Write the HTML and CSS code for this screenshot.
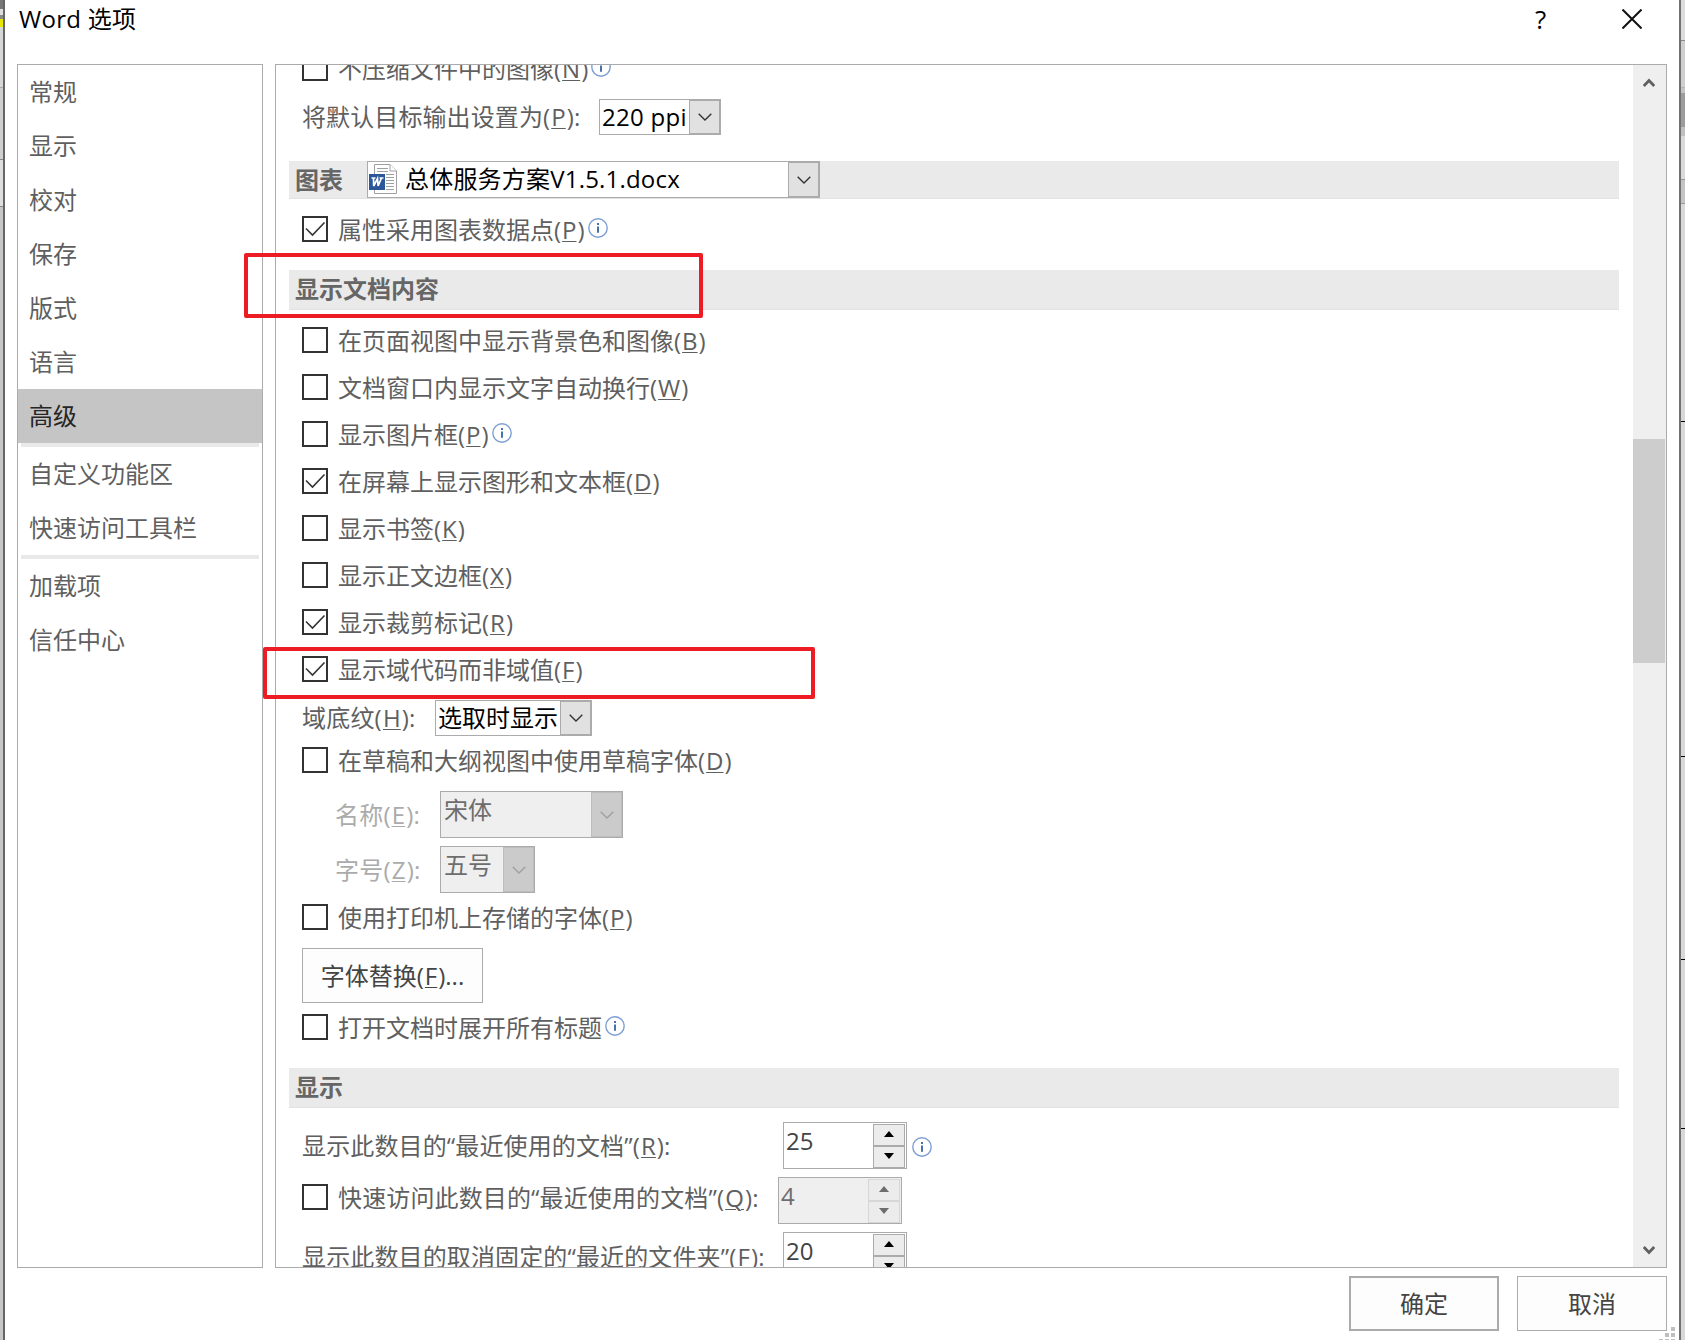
FILE: index.html
```html
<!DOCTYPE html>
<html lang="zh-CN">
<head>
<meta charset="UTF-8">
<meta name="viewport" content="width=device-width, initial-scale=1.0">
<title>Word 选项</title>
<link rel="stylesheet" href="styles.css">
</head>
<body>
    <!-- shared icons -->
    <svg class="defs" width="0" height="0">
        <symbol id="check" viewBox="0 0 22 22">
            <path d="M2 10.5 L8.5 17 L20.5 4.5" fill="none" stroke="#333" stroke-width="1.6"/>
        </symbol>
        <symbol id="info" viewBox="0 0 20 20">
            <circle cx="10" cy="10" r="9.2" fill="#fff" stroke="#7d9fd3" stroke-width="1.4"/>
            <path d="M9 5h2v2h-2zM9 8.4h2v6.4h-2z" fill="#4472b0"/>
        </symbol>
        <symbol id="arrow" viewBox="0 0 14 8">
            <path d="M0.7 0.8 L7 7 L13.3 0.8" fill="none" stroke="currentColor" stroke-width="1.4"/>
        </symbol>
        <symbol id="up" viewBox="0 0 10 6">
            <path d="M5 0 L10 6 H0z" fill="currentColor"/>
        </symbol>
        <symbol id="down" viewBox="0 0 10 6">
            <path d="M0 0 H10 L5 6z" fill="currentColor"/>
        </symbol>
    </svg>

    <div class="backdrop left"></div>
    <div class="dialog">
        <div class="titlebar">
            <span class="title">Word 选项</span>
            <span class="help">?</span>
            <svg class="close" width="20" height="20" viewBox="0 0 20 20"><path d="M0.5 0.5 L19.5 19.5 M19.5 0.5 L0.5 19.5" stroke="#111" stroke-width="2"/></svg>
        </div>

        <div class="main">
            <ul class="nav">
                <li>常规</li>
                <li>显示</li>
                <li>校对</li>
                <li>保存</li>
                <li>版式</li>
                <li>语言</li>
                <li class="active">高级</li>
                <li class="line"></li>
                <li>自定义功能区</li>
                <li>快速访问工具栏</li>
                <li class="line"></li>
                <li>加载项</li>
                <li>信任中心</li>
            </ul>

            <div class="panel">
                <div class="content">
                    <div class="row short"><span class="box"></span><label>不压缩文件中的图像(<u>N</u>)</label><svg class="info"><use href="#info"/></svg></div>
                    <div class="row resolution">
                        <label>将默认目标输出设置为(<u>P</u>):</label>
                        <div class="select ppi"><span>220 ppi</span><i><svg><use href="#arrow"/></svg></i></div>
                    </div>

                    <div class="section chart">
                        <h3>图表</h3>
                        <div class="select file">
                            <svg class="doc" width="28" height="30" viewBox="0 0 28 30">
                                <path d="M5.5 0.5 H21 L27.5 7 V29.5 H5.5z" fill="#fff" stroke="#a0a0a0"/>
                                <path d="M21 0.5 V7 H27.5" fill="#fff" stroke="#a0a0a0"/>
                                <path d="M8 4.5h11M8 7.5h11M17 10.5h8M17 13.5h8M17 16.5h8M17 19.5h8M17 22.5h8M17 25.5h8" stroke="#a0a0a0"/>
                                <rect x="0" y="10" width="16" height="16" fill="#2b579a"/>
                                <path d="M2.5 14h4M4.5 14l0.2 8L8.5 14.5l0.6 7.5L12.5 14M10.5 14h4" fill="none" stroke="#fff" stroke-width="1.7"/>
                            </svg>
                            <span>总体服务方案V1.5.1.docx</span><i><svg><use href="#arrow"/></svg></i>
                        </div>
                    </div>
                    <div class="row tall"><span class="box"><svg><use href="#check"/></svg></span><label>属性采用图表数据点(<u>P</u>)</label><svg class="info"><use href="#info"/></svg></div>

                    <div class="section"><h3>显示文档内容</h3></div>
                    <div class="row"><span class="box"></span><label>在页面视图中显示背景色和图像(<u>B</u>)</label></div>
                    <div class="row"><span class="box"></span><label>文档窗口内显示文字自动换行(<u>W</u>)</label></div>
                    <div class="row"><span class="box"></span><label>显示图片框(<u>P</u>)</label><svg class="info"><use href="#info"/></svg></div>
                    <div class="row"><span class="box"><svg><use href="#check"/></svg></span><label>在屏幕上显示图形和文本框(<u>D</u>)</label></div>
                    <div class="row"><span class="box"></span><label>显示书签(<u>K</u>)</label></div>
                    <div class="row"><span class="box"></span><label>显示正文边框(<u>X</u>)</label></div>
                    <div class="row"><span class="box"><svg><use href="#check"/></svg></span><label>显示裁剪标记(<u>R</u>)</label></div>
                    <div class="row short"><span class="box"><svg><use href="#check"/></svg></span><label>显示域代码而非域值(<u>F</u>)</label></div>
                    <div class="row shading">
                        <label>域底纹(<u>H</u>):</label>
                        <div class="select field"><span>选取时显示</span><i><svg><use href="#arrow"/></svg></i></div>
                    </div>
                    <div class="row short"><span class="box"></span><label>在草稿和大纲视图中使用草稿字体(<u>D</u>)</label></div>
                    <div class="row sub">
                        <label>名称(<u>E</u>):</label>
                        <div class="select disabled font"><span>宋体</span><i><svg><use href="#arrow"/></svg></i></div>
                    </div>
                    <div class="row sub last">
                        <label>字号(<u>Z</u>):</label>
                        <div class="select disabled size"><span>五号</span><i><svg><use href="#arrow"/></svg></i></div>
                    </div>
                    <div class="row short"><span class="box"></span><label>使用打印机上存储的字体(<u>P</u>)</label></div>
                    <div class="row action"><button class="btn">字体替换(<u>F</u>)...</button></div>
                    <div class="row tall"><span class="box"></span><label>打开文档时展开所有标题</label><svg class="info"><use href="#info"/></svg></div>

                    <div class="section display"><h3>显示</h3></div>
                    <div class="row number">
                        <label>显示此数目的“最近使用的文档”(<u>R</u>):</label>
                        <div class="spin"><span>25</span><div class="arrows"><b><svg><use href="#up"/></svg></b><b><svg><use href="#down"/></svg></b></div></div>
                        <svg class="info"><use href="#info"/></svg>
                    </div>
                    <div class="row number quick">
                        <span class="box"></span><label>快速访问此数目的“最近使用的文档”(<u>Q</u>):</label>
                        <div class="spin disabled"><span>4</span><div class="arrows"><b><svg><use href="#up"/></svg></b><b><svg><use href="#down"/></svg></b></div></div>
                    </div>
                    <div class="row number folders">
                        <label>显示此数目的取消固定的“最近的文件夹”(<u>F</u>):</label>
                        <div class="spin"><span>20</span><div class="arrows"><b><svg><use href="#up"/></svg></b><b><svg><use href="#down"/></svg></b></div></div>
                    </div>
                </div>
                <div class="scrollbar">
                    <svg width="12" height="10" viewBox="0 0 12 10"><path d="M0.8 8 L6 2.6 L11.2 8" fill="none" stroke="#606060" stroke-width="2.8"/></svg>
                    <div class="thumb"></div>
                    <svg width="12" height="10" viewBox="0 0 12 10"><path d="M0.8 2 L6 7.4 L11.2 2" fill="none" stroke="#606060" stroke-width="2.8"/></svg>
                </div>
            </div>
        </div>

        <div class="footer">
            <button class="btn ok">确定</button>
            <button class="btn">取消</button>
        </div>
        <svg class="grip" width="16" height="13" viewBox="0 0 16 13"><path d="M12 0h4v4h-4zM6 6h4v4h-4zM12 6h4v4h-4zM0 12h4v4h-4zM6 12h4v4h-4zM12 12h4v4h-4z" fill="#bfbfbf"/></svg>

        <!-- red highlights -->
        <div class="mark mark-title"></div>
        <div class="mark mark-field"></div>
    </div>
    <div class="backdrop right"></div>
</body>
</html>
```
FILE: styles.css
```css
* {
    box-sizing: border-box;
}

body {
    margin: 0;
    display: flex;
    width: 1685px;
    height: 1340px;
    overflow: hidden;
    font-family: "Open Sans", "Noto Sans CJK SC", sans-serif;
    font-size: 24px;
    line-height: 26px;
    color: #5f5f5f;
    background: #d4d4d4;
}

.defs {
    position: absolute;
}

svg {
    display: block;
    flex: none;
}

u {
    margin: 0 1px;
    text-decoration-thickness: 1px;
    text-underline-offset: 2px;
}

/* slices of the window behind the dialog */
.backdrop.left {
    width: 3px;
    background: linear-gradient(#777 0 9px, #ddd 9px 15px, #888 15px 19px, #e6e600 19px 27px, #d6d6d6 27px 87px, #aaa 87px 88px, #cfcfcf 88px 159px, #888 159px 160px, #dedede 160px 206px, #888 206px 207px, #c6c6c6 207px);
}

.backdrop.right {
    width: 4px;
    background: linear-gradient(#dcdcdc 0 40px, #888 40px 41px, #cfcfcf 41px 87px, #b5b5b5 87px 88px, #c4c4c4 88px 93px, #9c9c9c 93px 127px, #c0c0c0 127px 136px, #dadada 136px 179px, #999 179px 180px, #c4c4c4 180px 203px, #999 203px 204px, #d8d8d8 204px 421px, #000 421px 422px, #d8d8d8 422px 756px, #000 756px 757px, #d8d8d8 757px 959px, #000 959px 960px, #d8d8d8 960px 1128px, #000 1128px 1129px, #d8d8d8 1129px);
}

.dialog {
    position: relative;
    width: 1678px;
    border-left: 2px solid #666;
    border-right: 2px solid #717373;
    background: #fff;
}

.titlebar {
    display: flex;
    height: 64px;
    padding: 6px 37px 0 14px;
    color: #000;
}

.title {
    flex: 1;
    letter-spacing: 0.3px;
}

.help {
    width: 87px;
    font-size: 26px;
}

.close {
    margin-top: 3px;
}

.main {
    display: flex;
    gap: 12px;
    height: 1204px;
    padding: 0 12px;
}

.nav {
    width: 246px;
    margin: 0;
    padding: 0;
    list-style: none;
    border: 1px solid #ababab;
}

.nav li {
    height: 54px;
    padding: 14px 11px;
}

.nav .active {
    background: #c5c5c5;
    color: #262626;
}

.nav .line {
    height: 4px;
    margin: 0 3px;
    padding: 0;
    background: #e9e9e9;
}

.panel {
    display: flex;
    flex: 1;
    border: 1px solid #ababab;
    overflow: hidden;
}

.content {
    flex: 1;
    margin-top: -10px;
    padding: 0 14px 0 13px;
}

.row {
    display: flex;
    height: 47px;
    padding-left: 13px;
    white-space: nowrap;
}

.row label {
    padding-top: 1px;
}

.short {
    height: 44px;
}

.tall {
    height: 54px;
}

.box {
    flex: none;
    width: 26px;
    height: 26px;
    margin-right: 10px;
    border: 2px solid #333;
    background: #fff;
}

.box svg {
    width: 22px;
    height: 22px;
}

.info {
    width: 20px;
    height: 20px;
    margin: 2px 0 0 3px;
}

.section {
    display: flex;
    height: 40px;
    margin-bottom: 17px;
    padding: 6px 6px 0;
    background: #eaeaea;
    border-bottom: 1px solid #e2e2e2;
}

.section h3 {
    margin: 0;
    font-size: 24px;
    font-weight: bold;
    color: #666;
}

.chart {
    height: 38px;
    padding-top: 0;
}

.chart h3 {
    width: 72px;
    padding-top: 6px;
}

.display {
    margin-bottom: 14px;
}

/* drop-down boxes */
.select {
    display: flex;
    height: 36px;
    border: 1px solid #ababab;
    background: #fff;
    color: #000;
}

.select span {
    flex: 1;
    padding: 4px 0 0 2px;
}

.select i {
    display: flex;
    align-items: center;
    justify-content: center;
    width: 31px;
    border: 1px solid #ababab;
    background: #e1e1e1;
    color: #333;
}

.select i svg {
    width: 14px;
    height: 8px;
}

.resolution {
    height: 62px;
}

.resolution label,
.shading label {
    padding-top: 5px;
}

.resolution label {
    width: 297px;
    letter-spacing: 0.1px;
}

.ppi {
    width: 122px;
    letter-spacing: 0.3px;
}

.file {
    width: 453px;
    height: 37px;
}

.file .doc {
    margin: 2px 0 0 1px;
}

.file span {
    padding-left: 8px;
    letter-spacing: 0.2px;
}

.shading label {
    width: 133px;
    letter-spacing: 0.2px;
}

.field {
    width: 157px;
}

.sub {
    height: 55px;
    padding-left: 46px;
    color: #ababab;
}

.sub label {
    width: 105px;
    padding-top: 11px;
    letter-spacing: 0.2px;
}

.last {
    height: 58px;
}

.select.disabled {
    height: 47px;
    background: #efefef;
    color: #6d6d6d;
}

.select.disabled span {
    padding: 5px 0 0 3px;
}

.select.disabled i {
    background: #cbcbcb;
    border-color: #bdbdbd;
    color: #a0a0a0;
}

.font {
    width: 183px;
}

.size {
    width: 95px;
}

.btn {
    width: 150px;
    height: 55px;
    padding: 0;
    border: 1px solid #ababab;
    background: #fdfdfd;
    color: #444;
    font: inherit;
}

.action {
    height: 66px;
}

.action .btn {
    width: 181px;
}

/* number fields */
.number {
    height: 55px;
}

.number label {
    width: 481px;
    padding-top: 11px;
    letter-spacing: 0.13px;
}

.number .info {
    margin: 15px 0 0 5px;
}

.quick .box {
    margin-top: 7px;
}

.quick label {
    width: 440px;
    padding-top: 8px;
}

.folders label {
    padding-top: 12px;
}

.spin {
    display: flex;
    width: 124px;
    height: 47px;
    padding: 1px;
    border: 1px solid #ababab;
    color: #444;
}

.spin span {
    flex: 1;
    padding: 4px 0 0 1px;
}

.arrows {
    width: 32px;
    color: #000;
}

.arrows b {
    display: flex;
    align-items: center;
    justify-content: center;
    height: 22px;
    padding-bottom: 2px;
    border: 1px solid #ababab;
    background: #ececec;
}

.arrows b svg {
    width: 10px;
    height: 6px;
}

.spin.disabled {
    background: #efefef;
    color: #6d6d6d;
}

.disabled .arrows {
    color: #6d6d6d;
}

.disabled .arrows b {
    border-color: #d6d6d6;
}

.scrollbar {
    display: flex;
    flex-direction: column;
    align-items: center;
    width: 33px;
    padding: 13px 0 12px;
    background: #efefef;
}

.scrollbar svg {
    margin-right: 1px;
}

.thumb {
    width: 32px;
    height: 224px;
    margin: 351px 1px auto 0;
    background: #cdcdcd;
}

.footer {
    display: flex;
    justify-content: flex-end;
    gap: 18px;
    padding: 8px 12px 0 0;
}

.ok {
    border-width: 2px;
}

.grip {
    position: absolute;
    right: 4px;
    bottom: 0;
}

.mark {
    position: absolute;
    border: 4px solid #ed1c24;
    border-radius: 2px;
}

.mark-title {
    left: 239px;
    top: 253px;
    width: 459px;
    height: 65px;
}

.mark-field {
    left: 258px;
    top: 647px;
    width: 552px;
    height: 52px;
}
```
